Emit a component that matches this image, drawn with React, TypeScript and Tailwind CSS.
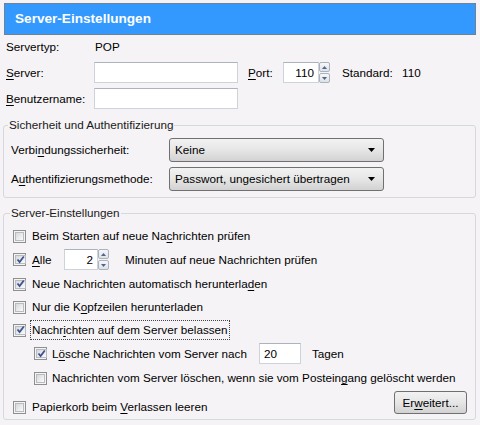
import React from 'react';

const U: React.FC<{ children: React.ReactNode }> = ({ children }) => (
  <span className="underline underline-offset-[2px] decoration-[1px]">{children}</span>
);

const CheckBox: React.FC<{ checked?: boolean }> = ({ checked }) => (
  <span className="w-[13px] h-[13px] shrink-0 border border-[#8f8f8f] bg-[#f4f4f4] p-[1px] flex">
    <span className="flex-1 border border-[#b8bcc2] bg-gradient-to-br from-[#d6d8db] to-[#fbfbfb] flex items-center justify-center">
      {checked && (
        <svg width="9" height="9" viewBox="0 0 9 9" className="-mt-[1px]">
          <path d="M1.5 4.5 L3.6 7 L7.8 1.5" fill="none" stroke="#3d5290" strokeWidth="1.8" />
        </svg>
      )}
    </span>
  </span>
);

const Spinner: React.FC = () => (
  <span className="w-[11px] h-[21px] flex flex-col gap-[1px]">
    {[0, 1].map((i) => (
      <span
        key={i}
        className="flex-1 border border-[#aab3bd] rounded-[2px] bg-gradient-to-b from-[#f6f7f8] to-[#dde2e7] flex items-center justify-center"
      >
        <svg width="5" height="3" viewBox="0 0 5 3">
          <path d={i === 0 ? 'M0 3 L2.5 0 L5 3 Z' : 'M0 0 L2.5 3 L5 0 Z'} fill="#51648c" />
        </svg>
      </span>
    ))}
  </span>
);

const TextBox: React.FC<{ className: string; value?: string; right?: boolean }> = ({ className, value, right }) => (
  <span
    className={`h-[21px] bg-white border border-[#ccd3da] border-t-[#abb3bc] flex items-center px-[4px] ${
      right ? 'justify-end' : 'justify-start'
    } ${className}`}
  >
    {value}
  </span>
);

const Select: React.FC<{ value: string }> = ({ value }) => (
  <span className="w-[215px] h-[24px] rounded-[3px] border border-[#707070] bg-gradient-to-b from-[#f2f2f2] via-[#e6e6e6] to-[#d2d2d2] flex items-center justify-between pl-[5px] pr-[8px]">
    <span>{value}</span>
    <svg width="7" height="4" viewBox="0 0 7 4">
      <path d="M0 0 L7 0 L3.5 4 Z" fill="#000" />
    </svg>
  </span>
);

export default function App() {
  return (
    <div
      className="w-[480px] h-[425px] bg-[#f5f3f5] text-black text-[11.7px] leading-[14px] overflow-hidden"
      style={{ fontFamily: '"Liberation Sans", Arial, sans-serif' }}
    >
      <div className="mx-[4px] mt-[3px] h-[32px] border border-[#6d8394] bg-[#3399ff] flex items-center px-[10px] text-white font-bold text-[13.6px]">
        Server-Einstellungen
      </div>

      <div className="pl-[6px] mt-[2px] flex flex-col gap-[5px]">
        <div className="h-[20px] flex items-center">
          <span className="w-[88px]">Servertyp:</span>
          <span className="pl-[1px]">POP</span>
        </div>
        <div className="h-[21px] flex items-center">
          <span className="w-[88px]">
            <U>S</U>erver:
          </span>
          <TextBox className="w-[144px]" />
          <span className="w-[35px] ml-[10px]">
            <U>P</U>ort:
          </span>
          <TextBox className="w-[36px]" value="110" right />
          <Spinner />
          <span className="ml-[12px] w-[60px]">Standard:</span>
          <span>110</span>
        </div>
        <div className="h-[21px] flex items-center">
          <span className="w-[88px]">
            <U>B</U>enutzername:
          </span>
          <TextBox className="w-[144px]" />
        </div>
      </div>

      <fieldset className="mt-[9px] ml-[3px] mr-[4px] border border-[#d5d9dd] rounded-[3px] pl-[7px] pb-[6px]">
        <legend className="ml-[-3px] px-[1px] text-[#1a1a1a]">Sicherheit und Authentifizierung</legend>
        <div className="mt-[6px] flex flex-col gap-[5px]">
          <div className="flex items-center">
            <span className="w-[158px]">
              Verbi<U>n</U>dungssicherheit:
            </span>
            <Select value="Keine" />
          </div>
          <div className="flex items-center">
            <span className="w-[158px]">
              A<U>u</U>thentifizierungsmethode:
            </span>
            <Select value="Passwort, ungesichert übertragen" />
          </div>
        </div>
      </fieldset>

      <fieldset className="mt-[8px] ml-[3px] mr-[4px] border border-[#d5d9dd] rounded-[3px] pl-[9px] pr-[8px] pb-[4px]">
        <legend className="ml-[-3px] px-[1px] text-[#1a1a1a]">Server-Einstellungen</legend>
        <div className="mt-[6px] flex flex-col">
          <div className="h-[20px] flex items-center gap-[6px]">
            <CheckBox />
            <span>
              Beim Starten auf neue Na<U>c</U>hrichten prüfen
            </span>
          </div>
          <div className="mt-[3px] h-[21px] flex items-center">
            <CheckBox checked />
            <span className="ml-[6px] w-[32px]">
              <U>A</U>lle
            </span>
            <TextBox className="w-[34px]" value="2" right />
            <Spinner />
            <span className="ml-[16px]">Minuten auf neue Nachrichten prüfen</span>
          </div>
          <div className="mt-[4px] h-[20px] flex items-center gap-[6px]">
            <CheckBox checked />
            <span>
              Neue Nachrichten automatisch herunterla<U>d</U>en
            </span>
          </div>
          <div className="mt-[3px] h-[20px] flex items-center gap-[6px]">
            <CheckBox />
            <span>
              Nur die K<U>o</U>pfzeilen herunterladen
            </span>
          </div>
          <div className="mt-[3px] h-[20px] flex items-center gap-[4px]">
            <CheckBox checked />
            <span className="h-[20px] flex items-center px-[1px] border border-dotted border-[#444]">
              Nachr<U>i</U>chten auf dem Server belassen
            </span>
          </div>
          <div className="mt-[3px] h-[21px] flex items-center pl-[21px]">
            <CheckBox checked />
            <span className="ml-[5px] w-[207px]">
              L<U>ö</U>sche Nachrichten vom Server nach
            </span>
            <TextBox className="w-[42px]" value="20" />
            <span className="ml-[11px]">Tagen</span>
          </div>
          <div className="mt-[4px] h-[20px] flex items-center pl-[21px] gap-[5px]">
            <CheckBox />
            <span>
              Nachrichten vom Server löschen, wenn sie vom Postein<U>g</U>ang gelöscht werden
            </span>
          </div>
          <div className="mt-[3px] h-[24px] flex justify-between">
            <div className="self-end h-[16px] flex items-center gap-[6px]">
              <CheckBox />
              <span>
                Papierkorb beim <U>V</U>erlassen leeren
              </span>
            </div>
            <button className="w-[73px] h-[23px] rounded-[3px] border border-[#707070] bg-gradient-to-b from-[#f2f2f2] via-[#e6e6e6] to-[#d2d2d2] flex items-center justify-center">
              <span>
                Er<U>w</U>eitert...
              </span>
            </button>
          </div>
        </div>
      </fieldset>
    </div>
  );
}
